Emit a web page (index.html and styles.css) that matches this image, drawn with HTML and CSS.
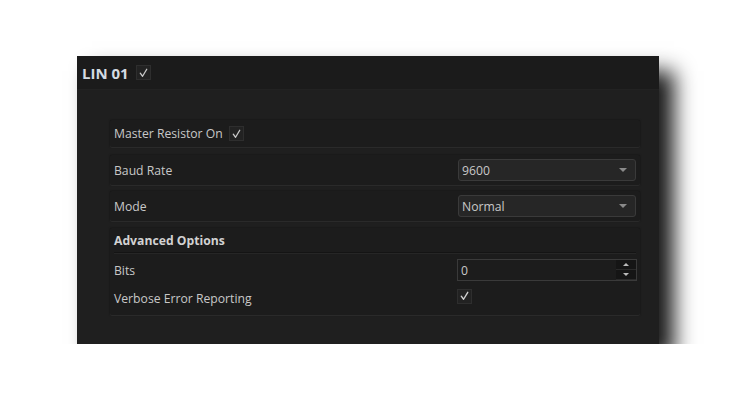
FILE: index.html
```html
<!DOCTYPE html>
<html>
<head>
<meta charset="utf-8">
<link rel="stylesheet" href="styles.css">
</head>
<body>
<div class="stage">
  <div class="panel">
    <div class="panel-head">
      <span class="title">LIN 01</span>
      <span class="check">
        <svg viewBox="0 0 14 14" width="14" height="14"><path d="M3.5 7.2 L6 10.5 L10.5 3" fill="none" stroke="#c8c8c8" stroke-width="1.4" stroke-linecap="round" stroke-linejoin="round"/></svg>
      </span>
    </div>
    <div class="panel-body">
      <div class="group row">
        <span class="label">Master Resistor On</span>
        <span class="check">
          <svg viewBox="0 0 14 14" width="14" height="14"><path d="M3.5 7.2 L6 10.5 L10.5 3" fill="none" stroke="#c8c8c8" stroke-width="1.4" stroke-linecap="round" stroke-linejoin="round"/></svg>
        </span>
      </div>
      <div class="group row split first">
        <span class="label">Baud Rate</span>
        <div class="select"><span>9600</span><span class="caret"></span></div>
      </div>
      <div class="group row split">
        <span class="label">Mode</span>
        <div class="select"><span>Normal</span><span class="caret"></span></div>
      </div>
      <div class="group adv">
        <div class="adv-head">Advanced Options</div>
        <div class="adv-row split">
          <span class="label">Bits</span>
          <div class="spin">
            <span class="val">0</span>
            <div class="spin-btns">
              <span class="sb"><span class="up"></span></span>
              <span class="sb"><span class="down"></span></span>
            </div>
          </div>
        </div>
        <div class="adv-row split">
          <span class="label">Verbose Error Reporting</span>
          <div class="cell">
            <span class="check">
              <svg viewBox="0 0 14 14" width="14" height="14"><path d="M3.5 7.2 L6 10.5 L10.5 3" fill="none" stroke="#d0d0d0" stroke-width="1.5" stroke-linecap="round" stroke-linejoin="round"/></svg>
            </span>
          </div>
        </div>
      </div>
    </div>
  </div>
</div>
</body>
</html>
```
FILE: styles.css
```css
* { box-sizing: border-box; }
html, body { margin: 0; padding: 0; background: #ffffff; }
body { font-family: "Open Sans", "Noto Sans", sans-serif; font-size: 12.2px; color: #c8c8c8; }
.stage { padding: 56px 0 0 77px; }
.panel {
  width: 582px; height: 288px;
  background: #1f1f1f;
  box-shadow: 15px 15px 20px rgba(0,0,0,0.9);
}
.panel-head {
  height: 34px;
  background: #1b1b1b;
  display: flex; align-items: center; gap: 7px;
  padding-left: 5px;
  border-bottom: 1px solid #222;
}
.title { font-weight: 700; font-size: 15px; color: #d4dbe2; letter-spacing: 0; }
.check {
  width: 15px; height: 15px;
  border: 1px solid #2e2e2e; background: #222;
  display: inline-flex; align-items: center; justify-content: center;
}
.panel-body { padding: 30px 19px 0 33px; display: flex; flex-direction: column; gap: 6px; }
.group {
  background: #1c1c1c;
  border-radius: 2px;
  box-shadow: 0 1px 0 #2a2a2a, 0 0 2px rgba(0,0,0,0.6);
}
.row { height: 27px; display: flex; align-items: center; gap: 6px; padding: 0 4px; }
.row.split { height: 30px; justify-content: space-between; padding-right: 4px; }
.row.first { margin-top: 2px; }
.split { display: flex; align-items: center; justify-content: space-between; }
.select {
  width: 178px; height: 22px;
  background: #262626; border: 1px solid #3a3a3a; border-radius: 3px;
  display: flex; align-items: center; justify-content: space-between;
  padding: 0 8px 0 3px; color: #c8c8c8;
}
.caret { width: 0; height: 0; border-left: 4px solid transparent; border-right: 4px solid transparent; border-top: 4px solid #8a8a8a; }
.adv { padding: 0 3px 2px 4px; height: 87px; margin-top: 1px; }
.adv-head { font-weight: 700; color: #d2d2d2; height: 25px; display: flex; align-items: center; border-bottom: 1px solid #141414; box-shadow: 0 1px 0 #262626; margin-right: 1px; margin-bottom: 3px; }
.adv-row { height: 28px; }
.spin {
  width: 180px; height: 22px;
  background: #1c1c1c; border: 1px solid #3a3a3a;
  display: flex; align-items: stretch; justify-content: space-between;
  padding-left: 3px;
}
.val { display: flex; align-items: center; color: #c8c8c8; }
.spin-btns { display: flex; flex-direction: column; width: 20px; }
.sb { flex: 1; background: #151515; display: flex; align-items: center; justify-content: center; border-bottom: 1px solid #2a2a2a; }
.up { width: 0; height: 0; border-left: 3px solid transparent; border-right: 3px solid transparent; border-bottom: 3px solid #bbb; }
.down { width: 0; height: 0; border-left: 3px solid transparent; border-right: 3px solid transparent; border-top: 3px solid #bbb; }
.cell { width: 180px; }
```
